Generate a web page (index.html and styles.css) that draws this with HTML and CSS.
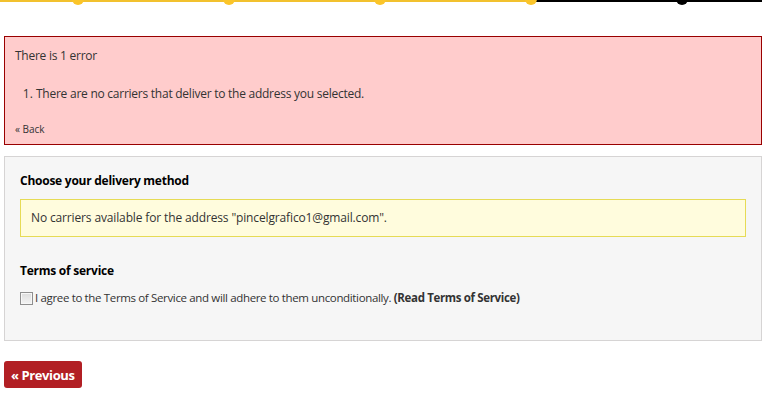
FILE: index.html
```html
<!DOCTYPE html>
<html>
<head>
<meta charset="utf-8">
<link rel="stylesheet" href="styles.css">
</head>
<body>
<div class="page">
  <div class="progress">
    <div class="step"><span class="dot"></span></div>
    <div class="step"><span class="dot"></span></div>
    <div class="step"><span class="dot"></span></div>
    <div class="step"><span class="dot"></span></div>
    <div class="step"><span class="dot dot-current"></span></div>
  </div>
  <div class="content">
    <div class="alert">
      <p class="alert-title">There is 1 error</p>
      <ol class="alert-list">
        <li>There are no carriers that deliver to the address you selected.</li>
      </ol>
      <a class="back" href="#">« Back</a>
    </div>
    <div class="box">
      <p class="box-heading">Choose your delivery method</p>
      <p class="warning">No carriers available for the address "pincelgrafico1@gmail.com".</p>
      <p class="box-heading terms-heading">Terms of service</p>
      <label class="terms">
        <input type="checkbox" class="check">
        <span>I agree to the Terms of Service and will adhere to them unconditionally. <a class="terms-link" href="#">(Read Terms of Service)</a></span>
      </label>
    </div>
    <a class="btn-prev" href="#">« Previous</a>
  </div>
</div>
</body>
</html>
```
FILE: styles.css
```css
* { box-sizing: border-box; }
html, body { margin: 0; padding: 0; background: #fff; }
body {
  font-family: "Open Sans", "Liberation Sans", sans-serif;
  font-size: 12px;
  letter-spacing: -0.25px;
  line-height: 18px;
  color: #333;
}
.page { width: 776px; }
.progress {
  display: flex;
  width: 762px;
  height: 6px;
  overflow: hidden;
  padding-left: 2px;
  background: linear-gradient(to right, #f2c12e 531px, #000 531px) top left / 100% 2px no-repeat;
}
.step {
  width: 151px;
  display: flex;
  justify-content: center;
}
.dot {
  width: 12px;
  height: 12px;
  border-radius: 50%;
  margin-top: -7px;
  background: #fbc52a;
}
.dot-current { background: #000; }
.content {
  padding: 30px 0 0 4px;
  width: 762px;
}
.alert {
  background: #ffcccc;
  border: 1px solid #990000;
  padding: 10px 10px 7px;
  color: #333;
}
.alert-title { margin: 0; }
.alert-list {
  margin: 20px 0 0;
  padding: 0 0 0 21px;
}
.alert-list li::marker { letter-spacing: 0; }
.back {
  display: block;
  margin-top: 18px;
  font-size: 10px;
  line-height: 16px;
  letter-spacing: 0;
  color: #333;
  text-decoration: none;
}
.box {
  margin-top: 11px;
  background: #f6f6f6;
  border: 1px solid #d6d4d4;
  padding: 15px 15px 33px;
}
.box-heading {
  margin: 0;
  font-weight: 700;
  color: #000;
}
.warning {
  margin: 9px 0 0;
  background: #fffcdd;
  border: 1px solid #e6db55;
  padding: 9px 10px;
  letter-spacing: -0.14px;
  color: #333;
}
.terms-heading { margin-top: 25px; }
.terms {
  display: flex;
  align-items: center;
  margin-top: 9px;
  font-size: 11.5px;
  letter-spacing: -0.35px;
  color: #333;
}
.check {
  appearance: none;
  -webkit-appearance: none;
  flex: none;
  width: 13px;
  height: 13px;
  margin: 0 2px 0 0;
  border: 1px solid #8f8f8f;
  background: linear-gradient(#dcdcdc, #f4f4f4);
  box-shadow: inset 0 0 0 1px #f7f7f7;
}
.terms-link {
  font-weight: 700;
  color: #333;
  text-decoration: none;
}
.btn-prev {
  display: inline-flex;
  align-items: center;
  margin-top: 20px;
  height: 27px;
  padding: 0 7px;
  background: #b21f24;
  border-radius: 3px;
  color: #fff;
  font-weight: 700;
  font-size: 13px;
  letter-spacing: -0.4px;
  text-decoration: none;
}
```
